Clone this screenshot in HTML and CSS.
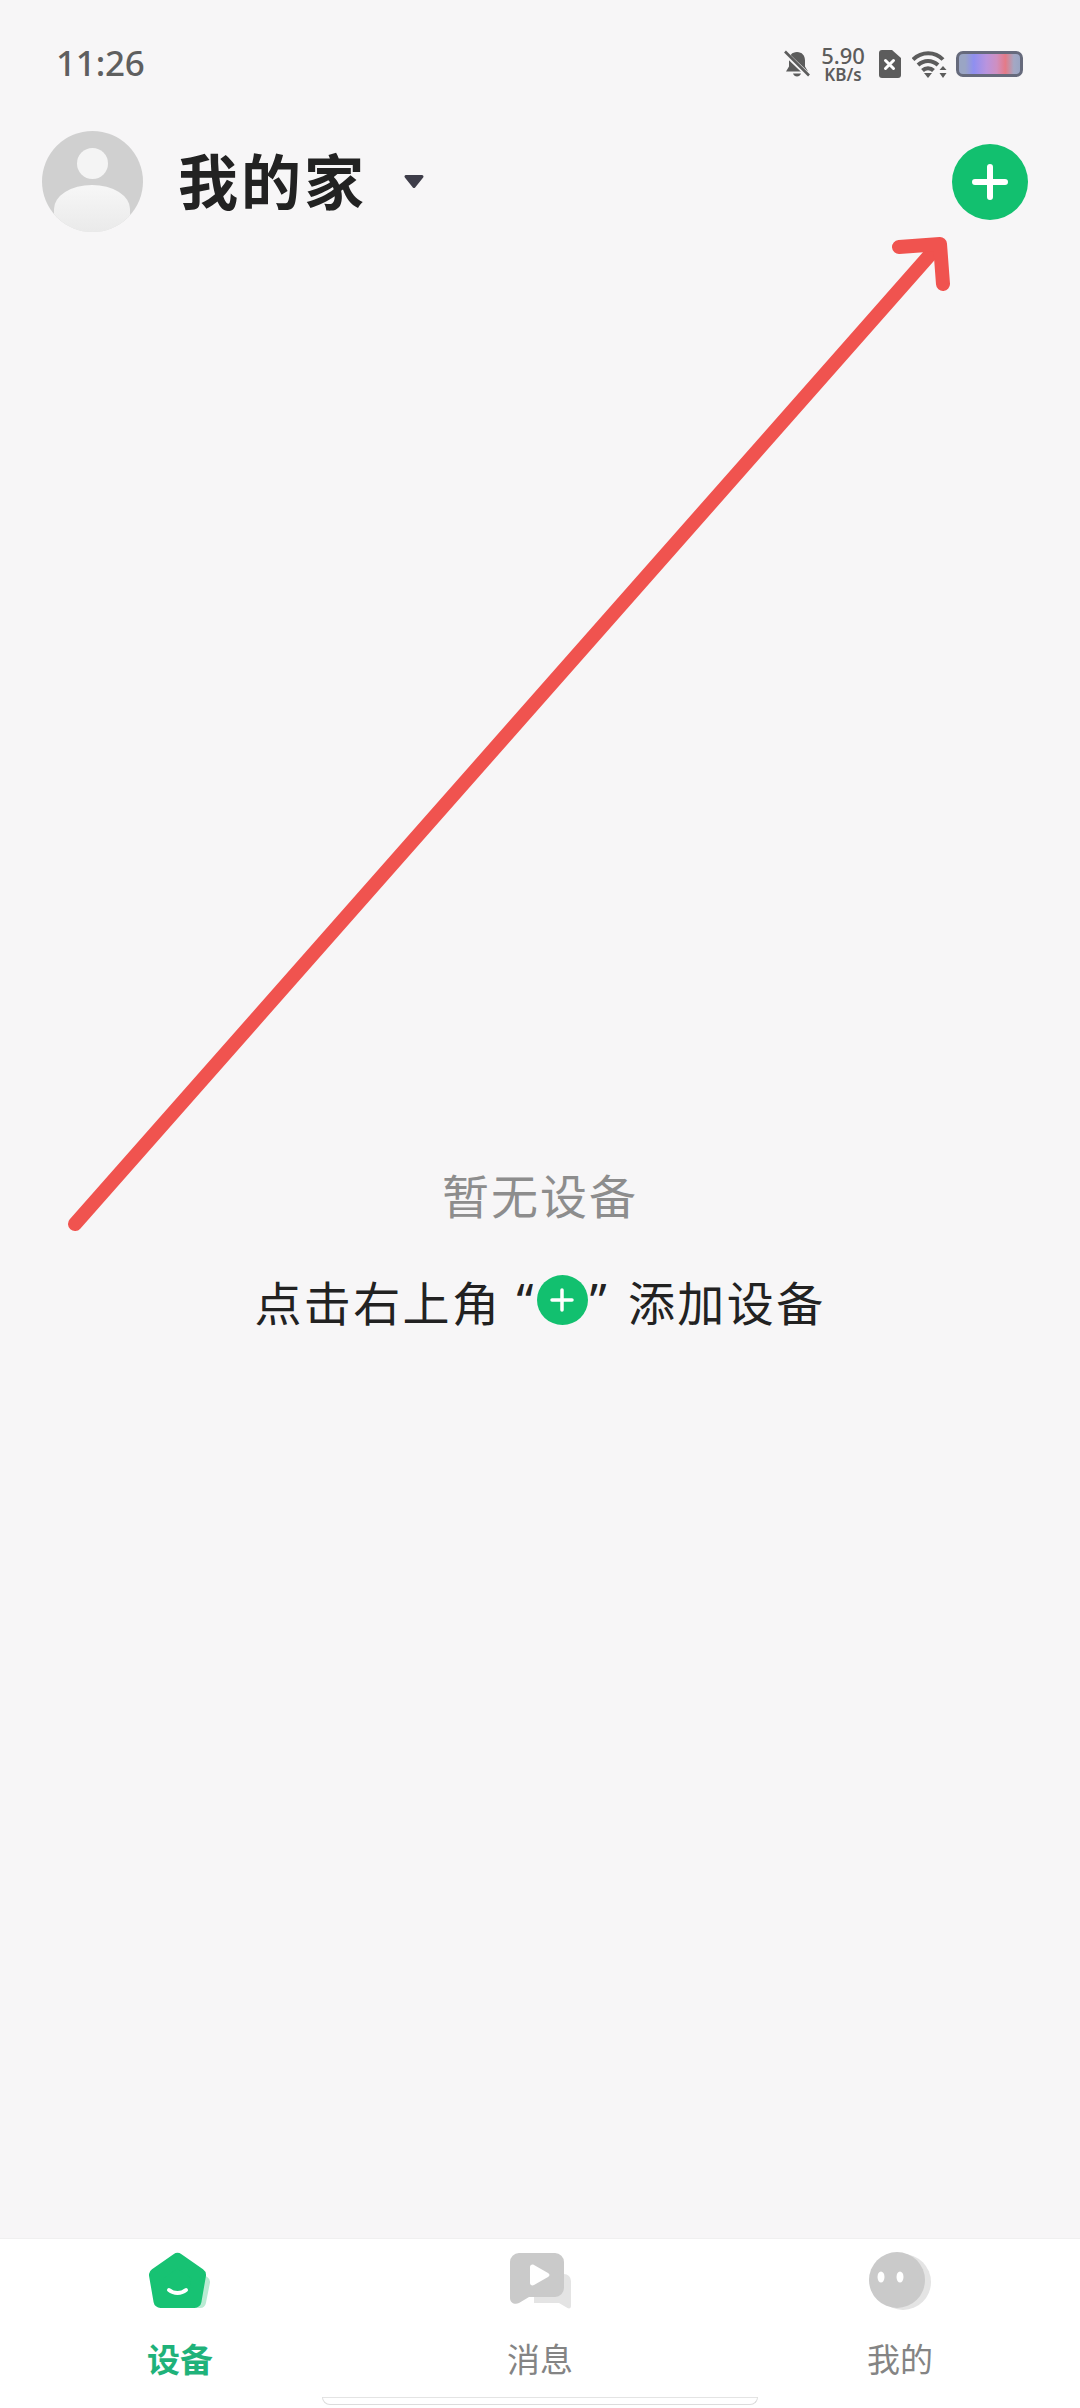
FILE: index.html
```html
<!DOCTYPE html>
<html lang="zh-CN">
<head>
<meta charset="UTF-8" />
<meta name="viewport" content="width=device-width, initial-scale=1" />
<title>我的家</title>
<link rel="stylesheet" href="styles.css">
</head>
<body>

<div class="page">

  <!-- STATUS BAR -->
  <div class="status-bar">
    <span class="time">11:26</span>
    <div class="status-icons">
      <svg class="ic-bell" width="26" height="28" viewBox="0 0 26 28">
        <path d="M13 2c-5 0-8 3.500-8 8.500v6L2 21.500h22l-3-5v-6C21 5.500 18 2 13 2z" fill="#5c5c5c"/>
        <path d="M9 23.500c.6 2 2.200 3 4 3s3.400-1 4-3z" fill="#5c5c5c"/>
        <path d="M1 3l24 23" stroke="#f7f6f7" stroke-width="5"/>
        <path d="M1 1.500l24 24" stroke="#5c5c5c" stroke-width="2.600"/>
      </svg>
      <div class="speed">
        <span class="speed-num">5.90</span>
        <span class="speed-unit">KB/s</span>
      </div>
      <svg class="ic-sim" width="23" height="28" viewBox="0 0 23 28">
        <path d="M4 0h10l9 8v17a3 3 0 0 1-3 3H4a3 3 0 0 1-3-3V3a3 3 0 0 1 3-3z" fill="#5c5c5c"/>
        <path d="M7.500 10.500l8 8M15.500 10.500l-8 8" stroke="#fff" stroke-width="3" stroke-linecap="round"/>
      </svg>
      <svg class="ic-wifi" width="36" height="28" viewBox="0 0 36 28" fill="none">
        <path d="M1 9.500C9.500 1 23 1 31 9.500" stroke="#5c5c5c" stroke-width="4"/>
        <path d="M6 15C12 9.500 20 9.500 26 15" stroke="#5c5c5c" stroke-width="4"/>
        <path d="M10.500 20.500c3-3 8-3 11 0" stroke="#5c5c5c" stroke-width="4"/>
        <path d="M12 23h8L16 28z" fill="#5c5c5c"/>
        <path d="M31 16l3.500 4h-7zM31 28l3.500-5h-7z" fill="#5c5c5c"/>
      </svg>
      <div class="battery"></div>
    </div>
  </div>

  <!-- HEADER -->
  <header class="top-bar">
    <div class="home-switch">
      <div class="avatar">
        <span class="avatar-head"></span>
        <span class="avatar-body"></span>
      </div>
      <h1 class="home-name">我的家</h1>
      <svg class="caret" width="22" height="15" viewBox="0 0 22 15">
        <path d="M3 2.500h16L11 12.500z" fill="#3e3d49" stroke="#3e3d49" stroke-width="3" stroke-linejoin="round"/>
      </svg>
    </div>
    <button class="add-btn" aria-label="添加设备">
      <svg width="36" height="36" viewBox="0 0 36 36">
        <path d="M18 3v30M3 18h30" stroke="#fff" stroke-width="6" stroke-linecap="round"/>
      </svg>
    </button>
  </header>

  <!-- EMPTY STATE -->
  <main class="empty">
    <p class="empty-title">暂无设备</p>
    <p class="empty-hint">
      <span>点击右上角</span>
      <span class="quote quote-open">“</span>
      <span class="mini-plus">
        <svg width="24" height="24" viewBox="0 0 24 24">
          <path d="M12 2v20M2 12h20" stroke="#fff" stroke-width="3.500" stroke-linecap="round"/>
        </svg>
      </span>
      <span class="quote quote-close">”</span>
      <span>添加设备</span>
    </p>
  </main>

  <!-- BOTTOM NAV -->
  <nav class="tabs">
    <div class="tab tab-active">
      <svg width="62" height="58" viewBox="0 0 62 58">
        <path d="M36 18l19 12-4 20H24z" fill="#b9ebd3" stroke="#b9ebd3" stroke-width="12" stroke-linejoin="round"/>
        <path d="M28.500 8L50 23l-4.500 26h-34L7 23z" fill="#17c273" stroke="#17c273" stroke-width="14" stroke-linejoin="round"/>
        <path d="M20 38c5 4 12 4 17 0" fill="none" stroke="#fff" stroke-width="4" stroke-linecap="round"/>
      </svg>
      <span class="tab-label">设备</span>
    </div>
    <div class="tab">
      <svg width="62" height="58" viewBox="0 0 62 58">
        <path d="M25 22h30a7 7 0 0 1 7 7v25c0 2-1.500 3-3.500 2L50 51H25z" fill="#e4e4e4"/>
        <path d="M10 1h36a9 9 0 0 1 9 9v26a9 9 0 0 1-9 9H20l-10 6c-4 2-9 0-9-5V10a9 9 0 0 1 9-9z" fill="#cacaca"/>
        <path d="M21 15c0-2 2-3 4-2l14 8c2 1 2 3 0 4l-14 8c-2 1-4 0-4-2z" fill="#fff"/>
      </svg>
      <span class="tab-label">消息</span>
    </div>
    <div class="tab">
      <svg width="62" height="58" viewBox="0 0 62 58">
        <circle cx="34" cy="30" r="28" fill="#e4e4e4"/>
        <circle cx="28" cy="28" r="28" fill="#cacaca"/>
        <ellipse cx="12" cy="25" rx="3.500" ry="5.500" fill="#fff"/>
        <ellipse cx="31" cy="25" rx="3.500" ry="5.500" fill="#fff"/>
      </svg>
      <span class="tab-label">我的</span>
    </div>
  </nav>

  <div class="home-bar"></div>

  <!-- Red arrow drawn over the screen -->
  <svg class="arrow" width="1080" height="2408" viewBox="0 0 1080 2408" fill="none">
    <path d="M75 1224L936 248" stroke="#f0534f" stroke-width="14" stroke-linecap="round"/>
    <path d="M899 247L940 244L943 284" stroke="#f0534f" stroke-width="14" stroke-linecap="round" stroke-linejoin="round"/>
  </svg>

</div>

</body>
</html>
```

FILE: styles.css
```css
/* Reset and base */
* {
  box-sizing: border-box;
}
body {
  margin: 0;
  font-family: "Noto Sans CJK SC", "Noto Sans", sans-serif;
  background: #f7f6f7;
}

.page {
  position: relative;
  width: 1080px;
  height: 2408px;
  display: flex;
  flex-direction: column;
  overflow: hidden;
  background: #f7f6f7;
}

/* Status bar */
.status-bar {
  height: 131px;
  padding: 44px 57px 0 56px;
  display: flex;
  justify-content: space-between;
  align-items: flex-start;
}
.time {
  font-family: "Noto Sans", sans-serif;
  font-size: 35px;
  line-height: 38px;
  font-weight: 500;
  letter-spacing: -0.2px;
  color: #5f5f5f;
}
.status-icons {
  display: flex;
  align-items: center;
  height: 40px;
}
.ic-bell {
  margin-right: 11px;
}
.speed {
  display: flex;
  flex-direction: column;
  align-items: center;
  width: 44px;
  margin-right: 13px;
  font-family: "Noto Sans", sans-serif;
  color: #5c5c5c;
}
.speed-num {
  font-size: 22px;
  line-height: 21px;
  font-weight: 500;
}
.speed-unit {
  font-size: 17px;
  line-height: 17px;
  font-weight: 600;
}
.ic-sim {
  margin-right: 11px;
}
.ic-wifi {
  margin-right: 8px;
}
.battery {
  width: 67px;
  height: 26px;
  border: 3px solid #666a7c;
  border-radius: 7px;
  background: linear-gradient(90deg, #9aa5c4 0%, #9aa5c4 10%, #8f8ff0 24%, #b994de 45%, #cf8fc0 62%, #e57a87 76%, #a4a8c4 90%, #9aa5c4 100%);
}

/* Header */
.top-bar {
  height: 101px;
  padding: 0 52px 0 42px;
  display: flex;
  justify-content: space-between;
  align-items: center;
}
.home-switch {
  display: flex;
  align-items: center;
}
.avatar {
  position: relative;
  width: 101px;
  height: 101px;
  border-radius: 50%;
  overflow: hidden;
  background: linear-gradient(180deg, #d0d0d0 0%, #d0d0d0 80%, #e2e2e2 100%);
}
.avatar-head {
  position: absolute;
  left: 35px;
  top: 17px;
  width: 31px;
  height: 31px;
  border-radius: 50%;
  background: #f4f4f4;
}
.avatar-body {
  position: absolute;
  left: 12px;
  top: 54px;
  width: 76px;
  height: 60px;
  border-radius: 38px 38px 0 0 / 24px 24px 0 0;
  background: linear-gradient(180deg, #f7f7f7, #e6e6e6);
}
.home-name {
  margin: 0 0 6px 35px;
  font-size: 60px;
  line-height: 70px;
  font-weight: 700;
  letter-spacing: 3px;
  color: #222222;
}
.caret {
  margin-left: 36px;
}
.add-btn {
  width: 76px;
  height: 76px;
  padding: 0;
  border: none;
  border-radius: 50%;
  background: #12c06f;
  display: flex;
  align-items: center;
  justify-content: center;
}

/* Empty state */
.empty {
  flex: 1;
  padding-top: 932px;
  display: flex;
  flex-direction: column;
  align-items: center;
}
.empty-title {
  margin: 0;
  font-size: 47px;
  line-height: 60px;
  letter-spacing: 2px;
  color: #8d8d8d;
}
.empty-hint {
  margin: 46px 0 0 0;
  display: flex;
  align-items: center;
  height: 60px;
  font-size: 47px;
  letter-spacing: 2.4px;
  color: #222222;
}
.quote {
  font-family: "Noto Sans", sans-serif;
}
.quote-open {
  margin: 0 1px 0 15px;
}
.quote-close {
  margin: 0 19px 0 2px;
}
.mini-plus {
  width: 51px;
  height: 50px;
  border-radius: 50%;
  background: #12c06f;
  display: flex;
  align-items: center;
  justify-content: center;
}

/* Bottom nav */
.tabs {
  height: 170px;
  padding-top: 13px;
  display: grid;
  grid-template-columns: repeat(3, 1fr);
  background: #ffffff;
  border-top: 1px solid #f0f0f0;
}
.tab {
  display: flex;
  flex-direction: column;
  align-items: center;
}
.tab-label {
  margin-top: 25px;
  font-size: 33px;
  line-height: 46px;
  color: #848484;
}
.tab-active .tab-label {
  font-weight: 700;
  color: #1fb27a;
}

/* Gesture bar, sits on the nav */
.home-bar {
  position: absolute;
  left: 322px;
  bottom: 3px;
  width: 436px;
  height: 8px;
  background: #ffffff;
  border: 1px solid #dcdcdc;
  border-top-color: #e4e4e4;
  border-radius: 0 0 8px 8px;
}

.arrow {
  position: absolute;
  left: 0;
  top: 0;
  pointer-events: none;
}
```
